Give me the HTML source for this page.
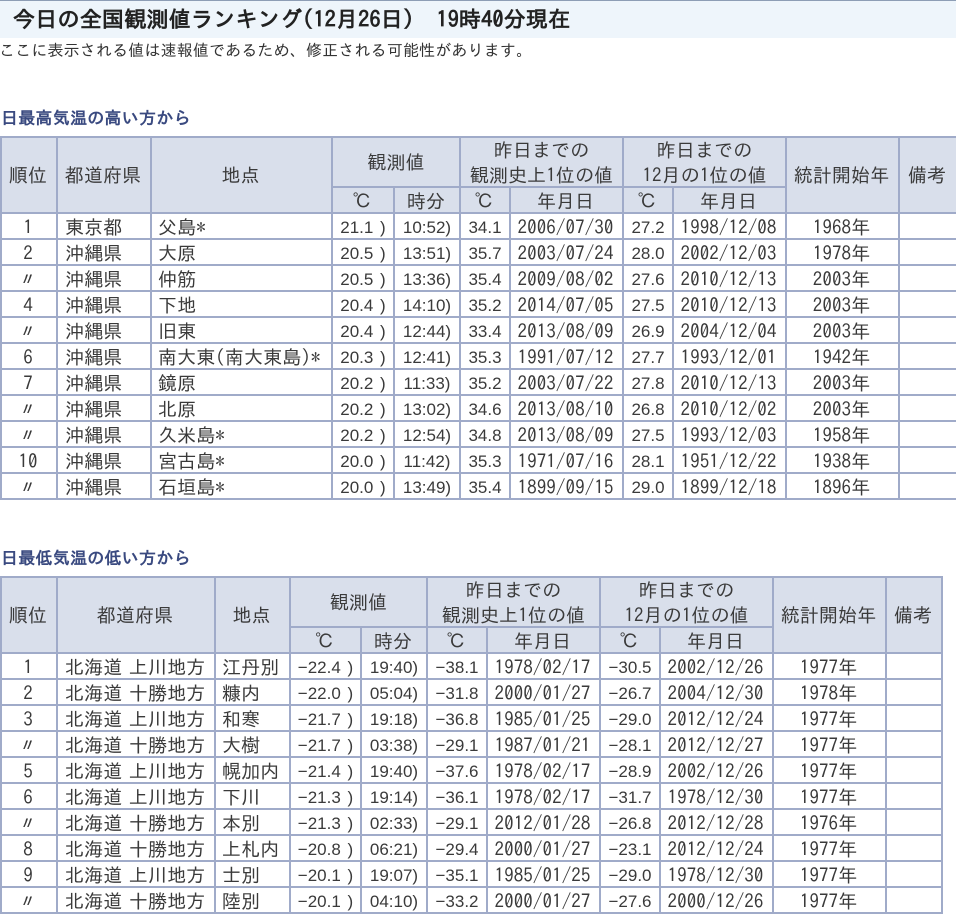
<!DOCTYPE html>
<html lang="ja"><head><meta charset="utf-8"><title>今日の全国観測値ランキング</title>
<style>
html,body{margin:0;padding:0;background:#fff}
body{position:relative;width:956px;height:913px;overflow:hidden;font-family:"IPAGothic","Noto Sans CJK JP",sans-serif;color:#333}
.title{position:absolute;left:0;top:0;width:956px;height:38px;background:#eef5fb;border-top:1px solid #8d9db5;box-sizing:border-box;font-weight:bold;font-size:22px;line-height:36px;padding-left:13px;color:#222;white-space:pre;letter-spacing:.25px}
.note{position:absolute;left:-1px;top:41px;font-size:16px;line-height:18px;white-space:pre;color:#333;letter-spacing:.16px}
h2{position:absolute;left:1px;margin:0;font-size:17px;line-height:20px;font-weight:bold;color:#3a4a80;letter-spacing:.25px}
table{position:absolute;left:0;table-layout:fixed;border-collapse:separate;border-spacing:0;font-size:19px;letter-spacing:.1px;word-spacing:-3px;color:#3a3a3a}
td,th{box-sizing:border-box;border-right:2px solid #a0abc9;border-bottom:2px solid #a0abc9;padding:4px 2px 0 0;text-align:center;font-weight:normal;white-space:nowrap;overflow:hidden}
thead tr:first-child th{border-top:2px solid #a0abc9}
tr th:first-child,tr td:first-child{border-left:2px solid #a0abc9}
thead tr:nth-child(2) th:first-child{border-left:0}
th{background:#d9dfeb;line-height:20px}
th.m{padding:0;height:52px;overflow:visible;vertical-align:top}
th.m div{height:48px;line-height:25px;overflow:visible}
th.m div.o{line-height:50px}
tr.r1 th[rowspan]{padding-top:2px;line-height:22px}
td{height:26px;line-height:20px}
tbody td:nth-child(4),tbody td:nth-child(5),tbody td:nth-child(6),tbody td:nth-child(8){font-family:"Liberation Sans",sans-serif;font-size:17px;letter-spacing:0;word-spacing:2px;padding-right:0}
.l{text-align:left;padding-left:6px;padding-right:0}
.p{text-align:left;padding-left:7px;padding-right:0}
.r1{height:52px}.r2{height:26px}
</style></head><body>
<div class="title">今日の全国観測値ランキング(12月26日） 19時40分現在</div>
<div class="note">ここに表示される値は速報値であるため、修正される可能性があります。</div>
<h2 style="top:109px">日最高気温の高い方から</h2>
<table style="top:136px;width:958px">
<colgroup><col style="width:58px"><col style="width:94px"><col style="width:181px"><col style="width:62px"><col style="width:66px"><col style="width:50px"><col style="width:113px"><col style="width:50px"><col style="width:113px"><col style="width:113px"><col style="width:58px"></colgroup>
<thead>
<tr class="r1"><th rowspan="2">順位</th><th rowspan="2">都道府県</th><th rowspan="2">地点</th><th class="m" colspan="2"><div class="o">観測値</div></th><th class="m" colspan="2"><div>昨日までの<br>観測史上1位の値</div></th><th class="m" colspan="2"><div>昨日までの<br>12月の1位の値</div></th><th rowspan="2">統計開始年</th><th rowspan="2">備考</th></tr>
<tr class="r2"><th>℃</th><th>時分</th><th>℃</th><th>年月日</th><th>℃</th><th>年月日</th></tr>
</thead>
<tbody>
<tr><td>1</td><td class="p">東京都</td><td class="l">父島*</td><td>21.1 )</td><td>10:52)</td><td>34.1</td><td>2006/07/30</td><td>27.2</td><td>1998/12/08</td><td>1968年</td><td></td></tr>
<tr><td>2</td><td class="p">沖縄県</td><td class="l">大原</td><td>20.5 )</td><td>13:51)</td><td>35.7</td><td>2003/07/24</td><td>28.0</td><td>2002/12/03</td><td>1978年</td><td></td></tr>
<tr><td>〃</td><td class="p">沖縄県</td><td class="l">仲筋</td><td>20.5 )</td><td>13:36)</td><td>35.4</td><td>2009/08/02</td><td>27.6</td><td>2010/12/13</td><td>2003年</td><td></td></tr>
<tr><td>4</td><td class="p">沖縄県</td><td class="l">下地</td><td>20.4 )</td><td>14:10)</td><td>35.2</td><td>2014/07/05</td><td>27.5</td><td>2010/12/13</td><td>2003年</td><td></td></tr>
<tr><td>〃</td><td class="p">沖縄県</td><td class="l">旧東</td><td>20.4 )</td><td>12:44)</td><td>33.4</td><td>2013/08/09</td><td>26.9</td><td>2004/12/04</td><td>2003年</td><td></td></tr>
<tr><td>6</td><td class="p">沖縄県</td><td class="l">南大東(南大東島)*</td><td>20.3 )</td><td>12:41)</td><td>35.3</td><td>1991/07/12</td><td>27.7</td><td>1993/12/01</td><td>1942年</td><td></td></tr>
<tr><td>7</td><td class="p">沖縄県</td><td class="l">鏡原</td><td>20.2 )</td><td>11:33)</td><td>35.2</td><td>2003/07/22</td><td>27.8</td><td>2010/12/13</td><td>2003年</td><td></td></tr>
<tr><td>〃</td><td class="p">沖縄県</td><td class="l">北原</td><td>20.2 )</td><td>13:02)</td><td>34.6</td><td>2013/08/10</td><td>26.8</td><td>2010/12/02</td><td>2003年</td><td></td></tr>
<tr><td>〃</td><td class="p">沖縄県</td><td class="l">久米島*</td><td>20.2 )</td><td>12:54)</td><td>34.8</td><td>2013/08/09</td><td>27.5</td><td>1993/12/03</td><td>1958年</td><td></td></tr>
<tr><td>10</td><td class="p">沖縄県</td><td class="l">宮古島*</td><td>20.0 )</td><td>11:42)</td><td>35.3</td><td>1971/07/16</td><td>28.1</td><td>1951/12/22</td><td>1938年</td><td></td></tr>
<tr><td>〃</td><td class="p">沖縄県</td><td class="l">石垣島*</td><td>20.0 )</td><td>13:49)</td><td>35.4</td><td>1899/09/15</td><td>29.0</td><td>1899/12/18</td><td>1896年</td><td></td></tr>
</tbody></table>
<h2 style="top:549px">日最低気温の低い方から</h2>
<table style="top:576px;width:943px">
<colgroup><col style="width:58px"><col style="width:158px"><col style="width:75px"><col style="width:71px"><col style="width:66px"><col style="width:60px"><col style="width:113px"><col style="width:60px"><col style="width:113px"><col style="width:113px"><col style="width:56px"></colgroup>
<thead>
<tr class="r1"><th rowspan="2">順位</th><th rowspan="2">都道府県</th><th rowspan="2">地点</th><th class="m" colspan="2"><div class="o">観測値</div></th><th class="m" colspan="2"><div>昨日までの<br>観測史上1位の値</div></th><th class="m" colspan="2"><div>昨日までの<br>12月の1位の値</div></th><th rowspan="2">統計開始年</th><th rowspan="2">備考</th></tr>
<tr class="r2"><th>℃</th><th>時分</th><th>℃</th><th>年月日</th><th>℃</th><th>年月日</th></tr>
</thead>
<tbody>
<tr><td>1</td><td class="p">北海道 上川地方</td><td class="l">江丹別</td><td>−22.4 )</td><td>19:40)</td><td>−38.1</td><td>1978/02/17</td><td>−30.5</td><td>2002/12/26</td><td>1977年</td><td></td></tr>
<tr><td>2</td><td class="p">北海道 十勝地方</td><td class="l">糠内</td><td>−22.0 )</td><td>05:04)</td><td>−31.8</td><td>2000/01/27</td><td>−26.7</td><td>2004/12/30</td><td>1978年</td><td></td></tr>
<tr><td>3</td><td class="p">北海道 上川地方</td><td class="l">和寒</td><td>−21.7 )</td><td>19:18)</td><td>−36.8</td><td>1985/01/25</td><td>−29.0</td><td>2012/12/24</td><td>1977年</td><td></td></tr>
<tr><td>〃</td><td class="p">北海道 十勝地方</td><td class="l">大樹</td><td>−21.7 )</td><td>03:38)</td><td>−29.1</td><td>1987/01/21</td><td>−28.1</td><td>2012/12/27</td><td>1977年</td><td></td></tr>
<tr><td>5</td><td class="p">北海道 上川地方</td><td class="l">幌加内</td><td>−21.4 )</td><td>19:40)</td><td>−37.6</td><td>1978/02/17</td><td>−28.9</td><td>2002/12/26</td><td>1977年</td><td></td></tr>
<tr><td>6</td><td class="p">北海道 上川地方</td><td class="l">下川</td><td>−21.3 )</td><td>19:14)</td><td>−36.1</td><td>1978/02/17</td><td>−31.7</td><td>1978/12/30</td><td>1977年</td><td></td></tr>
<tr><td>〃</td><td class="p">北海道 十勝地方</td><td class="l">本別</td><td>−21.3 )</td><td>02:33)</td><td>−29.1</td><td>2012/01/28</td><td>−26.8</td><td>2012/12/28</td><td>1976年</td><td></td></tr>
<tr><td>8</td><td class="p">北海道 十勝地方</td><td class="l">上札内</td><td>−20.8 )</td><td>06:21)</td><td>−29.4</td><td>2000/01/27</td><td>−23.1</td><td>2012/12/24</td><td>1977年</td><td></td></tr>
<tr><td>9</td><td class="p">北海道 上川地方</td><td class="l">士別</td><td>−20.1 )</td><td>19:07)</td><td>−35.1</td><td>1985/01/25</td><td>−29.0</td><td>1978/12/30</td><td>1977年</td><td></td></tr>
<tr><td>〃</td><td class="p">北海道 十勝地方</td><td class="l">陸別</td><td>−20.1 )</td><td>04:10)</td><td>−33.2</td><td>2000/01/27</td><td>−27.6</td><td>2000/12/26</td><td>1977年</td><td></td></tr>
</tbody></table>
</body></html>
